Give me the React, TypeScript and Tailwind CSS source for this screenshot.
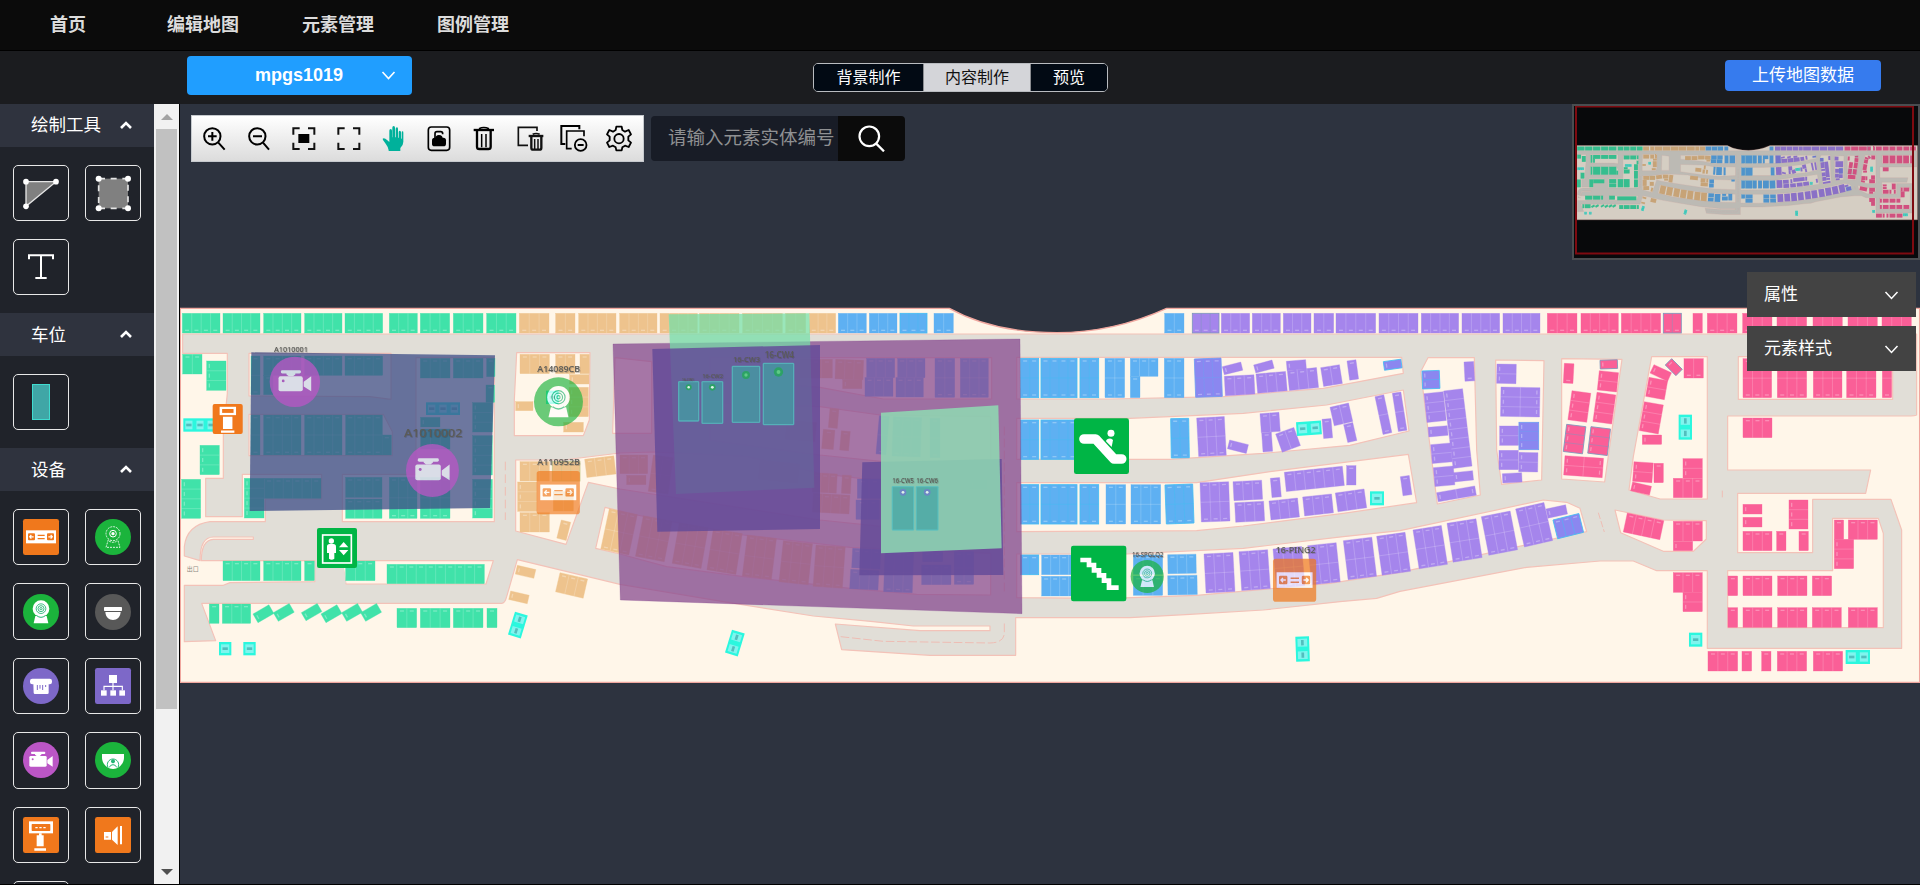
import { createContext, useContext, type ReactNode } from "react";

const FONT =
  "font-['Liberation_Sans','Noto_Sans_CJK_SC',sans-serif]";

/* ---------- parking bays: [x, y, width, height, columns, rows, rotation, outline] ---------- */
type Bay = [number, number, number, number, number?, number?, number?, string?];

const GREEN = "#40e2a9";
const TAN = "#eec38d";
const BLUE = "#5eb0f2";
const VIOLET = "#a585ec";
const INDIGO = "#8b87f0";
const PINK = "#fa5f97";
const CYAN = "#2bf7de";

const C = "#45bdf3";
const T = "#7f97bd";

const Detailed = createContext(true);

function Bays({ color, bays }: { color: string; bays: Bay[] }) {
  const detailed = useContext(Detailed);
  return (
    <>
      {bays.map(([x, y, w, h, cols = 1, rows = 1, rot = 0, outline], i) => {
        const cells: ReactNode[] = [];
        const cw = w / cols;
        const ch = h / rows;
        const wide = cw > ch;
        for (let c = 0; c < cols; c++) {
          for (let r = 0; r < rows; r++) {
            const low = rows === 1 ? y < 140 : r > 0;
            cells.push(
              wide ? (
                <rect key={`${c}-${r}`} x={cw * c + (c > 0 ? cw - 11 : 6)} y={ch * r + ch / 2 - 6} width={4} height={12} fill="#fff" opacity={0.3} />
              ) : (
                <rect key={`${c}-${r}`} x={cw * c + cw / 2 - 6} y={low ? ch * (r + 1) - 10 : ch * r + 6} width={12} height={4} fill="#fff" opacity={0.3} />
              ),
            );
          }
        }
        return (
          <g key={i} transform={`translate(${x} ${y}) rotate(${rot})`}>
            <rect width={w} height={h} fill={color} stroke={outline ?? color} strokeWidth={outline ? 2.5 : 1} />
            {detailed && (
              <>
                {Array.from({ length: cols - 1 }, (_, c) => (
                  <path key={`v${c}`} d={`M${cw * (c + 1)} 0V${h}`} stroke={outline ?? "#fff"} strokeOpacity={outline ? 0.7 : 0.28} strokeWidth={2} />
                ))}
                {Array.from({ length: rows - 1 }, (_, r) => (
                  <path key={`h${r}`} d={`M0 ${ch * (r + 1)}H${w}`} stroke={outline ?? "#fff"} strokeOpacity={outline ? 0.7 : 0.28} strokeWidth={2} />
                ))}
                {cells}
              </>
            )}
          </g>
        );
      })}
    </>
  );
}

function Chargers({ bays }: { bays: Bay[] }) {
  return (
    <>
      {bays.map(([x, y, w, h, cols = 1, rows = 1, rot = 0], i) => {
        const cw = w / cols;
        const ch = h / rows;
        const items: ReactNode[] = [];
        for (let c = 0; c < cols; c++) {
          for (let r = 0; r < rows; r++) {
            items.push(
              <g key={`${c}-${r}`}>
                <rect x={cw * c + 6} y={ch * r + 7} width={cw - 12} height={ch - 14} fill="#7ff5ee" />
                <rect
                  x={cw * c + cw / 2 - (rows > 1 ? 4 : 8)}
                  y={ch * r + ch / 2 - (rows > 1 ? 8 : 4)}
                  width={rows > 1 ? 8 : 16}
                  height={rows > 1 ? 16 : 8}
                  fill="#2d8f95"
                  opacity={0.55}
                />
              </g>,
            );
          }
        }
        return (
          <g key={i} transform={`translate(${x} ${y}) rotate(${rot})`}>
            <rect width={w} height={h} fill={CYAN} />
            {items}
          </g>
        );
      })}
    </>
  );
}

/* ---------- floor plan ---------- */
const ROAD =
  "M8 102H5210V345Q5208 348 5180 348H4643V510H5072L5057 580H4673V758H4898V598H5133L5165 690V1045H4582V812H4430L4360 783H4260L4040 802L3660 874L3590 895L3480 905L3250 930L3030 943L2850 953H2507V1066H2250L1985 1049L1966 972L2220 992H2430V978H2200L2080 965L1900 948L1630 905L1320 853L1012 779L980 890Q975 910 965 910H65L107 1022L13 1025V856H130L150 848L405 845V782H64Q64 720 100 718H220V711H100Q60 711 60 782L13 768V740Q20 675 90 665H256V597H425V523H187V650H77V535H130V400L142 280V160H8Z";

const ISLANDS = [
  "M207 160H633V298L570 290L207 288Z",
  "M207 343H610L637 395V467H207Z",
  "M708 173H943V665H487V523H708Z",
  "M490 782H940L918 852H498L490 805Z",
  "M1010 158H1230L1228 360L1210 407H1003V300Z",
  "M1007 480H1150L1320 459L1420 456L1700 470L1920 520L2040 535L2432 550V692L2110 680L1920 660L1660 620L1320 567L1225 547L1158 733L1007 693Z",
  "M1305 173L1415 185V400H1298Z",
  "M1590 173H2435V297H2110L1920 262L1590 230Z",
  "M1590 310L1920 320L2100 345L2432 350V478L2160 490L1920 465L1590 420Z",
  "M1275 622L1370 645L1690 705L2010 742L2432 760V885L2210 883L2010 865L1690 830L1460 800L1320 762L1247 745Z",
  "M2510 172H3665L3670 220L3430 265L3130 290L2790 297H2510Z",
  "M2510 355H2850L3190 340L3440 315L3670 270L3687 393L3510 436L3250 460L2970 478H2510Z",
  "M2510 548H3050L3270 515L3685 463L3710 608L3490 640L3190 678L3050 692L2510 695Z",
  "M2510 762H2840L3190 745L3490 710L3660 692L4090 600L4160 607L4200 625L4220 695L3660 817L3450 850L3050 886L2790 895L2510 893Z",
  "M3744 173H3883L3890 450L3901 585L3772 612L3722 215Z",
  "M3947 180L4092 182L4085 540L3965 553L3950 450Z",
  "M4145 176L4326 178L4274 546L4145 537Z",
  "M4415 170H4582V597H4440L4347 570L4360 470Z",
  "M4675 170H5138V298H4675Z",
  "M4305 630L4450 660L4579 662V717L4540 754H4450L4322 698Z",
  "M4643 812H4958V655H5095L5110 700V983H4643Z",
];

function FloorPlan({ detailed = true }: { detailed?: boolean }) {
  return (
    <Detailed.Provider value={detailed}>
      <path d="M1 25H2308Q2440 98 2630 98Q2800 98 2960 25H5219V1147H1Z" fill="#fff6e9" stroke="#f0a79f" strokeWidth={4} />
      <g stroke="#f3c2b8" strokeWidth={3.5} strokeLinejoin="round">
        <path d={ROAD} fill="#e1ded7" />
        {ISLANDS.map((d) => (
          <path key={d} d={d} fill="#fff6e9" />
        ))}
      </g>
      <path d="M407 776H488L498 850H407Z" fill="#e1ded7" />
      <g fill="none" stroke="#eebdb4" strokeWidth={3}>
        <path d="M976 485V660" strokeDasharray="26 12" />
        <path d="M1982 1010L2110 1024L2430 1029Q2472 1028 2473 1000V970" strokeDasharray="26 8" />
        <path d="M4627 572V592M4255 638L4273 696" strokeDasharray="20 6" />
        <path d="M2473 380V880" strokeDasharray="26 10" />
      </g>

      <Bays
        color={GREEN}
        bays={[
          [7, 40, 113, 59, 4], [129, 40, 111, 59, 4], [251, 40, 112, 59, 4], [374, 40, 112, 59, 4], [495, 40, 113, 59, 4],
          [628, 40, 84, 59, 3], [721, 40, 88, 59, 3], [820, 40, 89, 59, 3], [920, 40, 88, 59, 3],
          [8, 163, 58, 59, 2], [80, 183, 58, 88, 1, 3], [60, 436, 58, 88, 1, 3], [5, 538, 57, 117, 1, 4], [193, 535, 59, 119, 1, 4],
          [213, 168, 27, 116, 1, 2], [251, 168, 112, 58, 4], [251, 226, 28, 58], [374, 168, 112, 58, 4], [495, 168, 113, 58, 4],
          [213, 345, 27, 120, 1, 2], [251, 345, 112, 120, 4, 2], [374, 345, 112, 120, 4, 2], [497, 345, 110, 120, 4, 2], [607, 405, 27, 60],
          [721, 175, 89, 59, 3], [820, 175, 89, 59, 3], [920, 175, 25, 55], [918, 255, 26, 52], [878, 308, 59, 88, 1, 3],
          [722, 352, 58, 29], [722, 387, 88, 60, 3], [878, 407, 59, 118, 1, 4], [878, 538, 59, 116, 1, 4],
          [497, 532, 109, 60, 4], [497, 597, 109, 58, 4], [628, 532, 83, 123, 3, 2], [721, 532, 89, 123, 3, 2], [253, 535, 170, 60, 6],
          [129, 783, 111, 59, 4], [251, 783, 112, 59, 4], [374, 783, 29, 59], [497, 783, 88, 59, 3], [621, 793, 292, 58, 10],
          [88, 912, 29, 58], [127, 912, 85, 58, 3],
          [219, 942, 55, 30, 1, 1, -30], [280, 938, 55, 30, 1, 1, -30], [364, 938, 55, 28, 1, 1, -30],
          [423, 942, 55, 30, 1, 1, -30], [485, 938, 55, 30, 1, 1, -30], [542, 938, 55, 30, 1, 1, -30],
          [651, 925, 59, 58, 2], [721, 925, 89, 58, 3], [820, 925, 89, 58, 3], [921, 925, 30, 58],
        ]}
      />
      <Bays
        color={TAN}
        bays={[
          [1018, 40, 89, 59, 3], [1127, 40, 58, 59, 2], [1196, 40, 112, 59, 4], [1319, 40, 112, 59, 4], [1440, 40, 112, 59, 4],
          [1559, 40, 118, 59, 4], [1688, 40, 119, 59, 4], [1817, 40, 60, 59, 2], [1888, 40, 79, 59, 3],
          [1020, 163, 88, 58, 3], [1127, 163, 58, 58, 2], [1200, 163, 28, 58], [1169, 224, 58, 28], [1167, 262, 58, 88, 1, 3],
          [1007, 305, 52, 27], [1151, 367, 59, 29], [1020, 485, 88, 58, 3], [1117, 485, 83, 58, 3, 1, 0, "#c9c98d"], [1214, 478, 88, 55, 3, 1, -7],
          [1013, 546, 58, 88, 1, 3], [1120, 575, 60, 58, 2], [1020, 638, 88, 58, 3], [1144, 660, 29, 56, 1, 1, 14],
          [1012, 796, 57, 27, 1, 1, 13], [992, 873, 57, 26, 1, 1, 13], [1140, 818, 85, 59, 3, 1, 13],
        ]}
      />
      <g transform="translate(1260 0)">
        <Bays
          color={TAN}
          bays={[
            [60, 465, 83, 56, 3], [80, 526, 58, 28], [160, 465, 60, 110, 2, 2, 8],
            [28, 626, 86, 124, 3, 2, 12], [130, 647, 88, 124, 3, 2, 11], [238, 668, 88, 124, 3, 2, 10], [340, 687, 88, 124, 3, 2, 9],
            [442, 705, 88, 124, 3, 2, 7], [550, 722, 88, 124, 3, 2, 6], [648, 735, 88, 124, 3, 2, 4],
            [400, 185, 88, 58, 3], [500, 185, 88, 58, 3], [600, 178, 97, 56, 3], [707, 178, 84, 58, 3, 1, 2], [728, 238, 58, 28],
            [690, 325, 27, 58, 1, 1, 5], [670, 388, 35, 58, 1, 1, 5], [724, 392, 27, 58, 1, 1, 5], [560, 360, 90, 58, 3, 1, 5],
            [640, 518, 72, 58, 3, 1, 3], [727, 525, 27, 55, 1, 1, 3], [640, 580, 110, 56, 4, 1, 3], [480, 480, 120, 58, 4, 1, 6],
          ]}
        />
        <Bays
          color={BLUE}
          bays={[
            [715, 40, 84, 59, 3], [808, 40, 83, 59, 3], [900, 40, 81, 59, 3, 1, 0, C], [1002, 40, 58, 59, 2],
            [800, 175, 84, 58, 3], [893, 175, 82, 58, 3], [795, 233, 84, 56, 3], [888, 233, 82, 58, 3], [1005, 175, 59, 117, 2, 2], [1081, 175, 84, 117, 3, 2],
            [838, 347, 30, 115, 1, 2, 5], [880, 350, 85, 118, 3, 2, 2], [990, 355, 30, 118, 1, 2], [772, 537, 70, 58, 2], [768, 600, 70, 58, 2],
            [1110, 540, 50, 28],
            [758, 745, 85, 58, 3, 1, 3], [752, 808, 85, 58, 3, 1, 3], [855, 755, 86, 120, 3, 2, 2], [968, 755, 60, 30, 2], [965, 795, 88, 59, 3], [1063, 755, 58, 98, 2, 2],
          ]}
        />
      </g>
      <g transform="translate(2490 0)">
        <Bays
          color={BLUE}
          bays={[
            [464, 40, 58, 59, 2],
            [32, 175, 54, 118, 2, 2, 0, C], [93, 175, 108, 118, 4, 2, 0, C], [210, 175, 56, 118, 2, 2, 0, C], [285, 175, 59, 118, 2, 2],
            [361, 175, 83, 54, 3], [361, 229, 29, 64], [463, 175, 59, 118, 2, 2],
            [32, 360, 54, 118, 2, 2, 0, C], [93, 360, 108, 118, 4, 2, 0, C], [482, 356, 54, 118, 2, 2, -1, C],
            [32, 554, 54, 118, 2, 2, 0, C], [93, 554, 108, 118, 4, 2, 0, C], [210, 554, 56, 118, 2, 2, 0, C], [288, 554, 59, 118, 2, 2], [363, 554, 89, 118, 3, 2], [465, 555, 83, 117, 3, 2, -2, C],
            [32, 765, 54, 59, 2, 1, 0, C], [95, 765, 108, 59, 4], [95, 829, 108, 59, 4], [370, 765, 88, 58, 3], [370, 828, 88, 58, 3],
            [473, 764, 85, 57, 3, 1, -1], [473, 827, 88, 58, 3, 1, -1],
          ]}
        />
        <Bays color={INDIGO} bays={[[553, 177, 80, 115, 3, 2, -2, "#6f9df2"], [1120, 185, 53, 26, 1, 1, -8, C]]} />
        <Bays
          color={VIOLET}
          bays={[
            [547, 40, 80, 59, 3, 1, 0, T], [634, 40, 85, 59, 3], [727, 40, 84, 59, 3], [820, 40, 83, 59, 3], [912, 40, 59, 59, 2],
            [978, 40, 119, 59, 4], [1107, 40, 117, 59, 4], [1234, 40, 112, 59, 4], [1356, 40, 113, 59, 4], [1479, 40, 111, 59, 4],
            [637, 200, 57, 25, 1, 1, -14], [643, 229, 89, 58, 3, 1, -3], [731, 195, 57, 25, 1, 1, -15], [738, 222, 89, 58, 3, 1, -5],
            [829, 184, 58, 28, 1, 1, -5], [832, 212, 88, 60, 3, 1, -6], [932, 203, 57, 57, 2, 1, -9], [1011, 183, 27, 58, 1, 1, -8],
            [560, 354, 83, 116, 3, 2, -3], [659, 420, 58, 27, 1, 1, 14], [750, 341, 57, 57, 2, 1, -4], [755, 398, 29, 58, 1, 1, -4],
            [797, 402, 58, 58, 2, 1, -20], [936, 358, 27, 58, 1, 1, -5], [960, 322, 57, 57, 2, 1, -13], [1001, 374, 28, 55, 1, 1, -13],
            [1095, 290, 27, 116, 1, 2, -12], [1147, 280, 26, 116, 1, 2, -9],
            [570, 548, 86, 118, 3, 2, -2], [669, 545, 86, 57, 3, 1, -3], [674, 608, 87, 59, 3, 1, -3], [781, 535, 28, 58, 1, 1, -5],
            [823, 517, 175, 58, 6, 1, -6], [1010, 497, 28, 58], [777, 603, 86, 57, 3, 1, -6], [878, 591, 87, 57, 3, 1, -6], [976, 579, 87, 57, 3, 1, -8], [1171, 530, 27, 58, 1, 1, -8],
            [582, 762, 87, 117, 3, 2, -3], [687, 755, 86, 117, 3, 2, -4], [789, 747, 86, 118, 3, 2, -5], [893, 737, 86, 118, 3, 2, -6],
            [1000, 722, 86, 118, 3, 2, -7], [1100, 709, 86, 118, 3, 2, -8], [1209, 690, 86, 118, 3, 2, -9],
          ]}
        />
      </g>
      <g transform="translate(3660 120)">
        <Bays
          color={VIOLET}
          bays={[
            [141, 550, 88, 118, 3, 2, -9], [244, 530, 88, 118, 3, 2, -11], [347, 507, 87, 117, 3, 2, -13], [438, 507, 60, 28, 1, 1, -12],
            [192, 66, 29, 58, 1, 1, -3], [72, 161, 58, 87, 1, 3, -6], [131, 153, 57, 234, 1, 8, -7], [84, 262, 58, 29, 1, 1, -5],
            [92, 314, 60, 57, 1, 2, -5], [100, 383, 60, 57, 1, 2, -5], [160, 398, 58, 28, 1, 1, -6], [110, 458, 116, 28, 2, 1, -10],
            [291, 72, 58, 58, 1, 2, 1], [303, 141, 117, 88, 2, 3, 1], [299, 258, 57, 58, 1, 2], [297, 331, 58, 58, 1, 2], [357, 337, 57, 58, 1, 2, 1], [307, 401, 58, 28, 1, 1, -3],
          ]}
        />
        <Bays color={INDIGO} bays={[[66, 93, 52, 54, 1, 2, -2, C], [357, 247, 59, 82, 1, 3, 0, "#6f9df2"], [459, 540, 80, 58, 3, 1, -14, C]]} />
        <Bays
          color={PINK}
          bays={[
            [493, 70, 29, 59, 1, 1, 3], [600, 61, 52, 26, 1, 1, -2, T], [598, 92, 58, 58, 1, 2, 6], [516, 152, 57, 88, 1, 3, 8], [591, 157, 57, 88, 1, 3, 8],
            [500, 253, 58, 82, 1, 3, 7, T], [573, 260, 59, 80, 1, 3, 7, T], [495, 347, 116, 58, 2, 2, 4], [852, 56, 58, 58, 2],
            [762, 74, 58, 28, 1, 1, 25], [815, 56, 45, 27, 1, 1, 45, T], [747, 112, 57, 58, 1, 2, 10], [733, 185, 58, 88, 1, 3, 10],
            [727, 285, 58, 28], [702, 365, 58, 59, 1, 2, 4], [762, 370, 28, 58], [698, 426, 58, 27, 1, 1, 13], [849, 356, 58, 58, 1, 2], [820, 415, 87, 58, 3],
            [1029, 56, 86, 117, 3, 2], [1132, 56, 88, 117, 3, 2], [1240, 56, 86, 117, 3, 2], [1340, 56, 88, 117, 3, 2], [1447, 56, 28, 117, 1, 2],
            [1029, 234, 87, 59, 3], [1029, 493, 57, 29], [1029, 532, 57, 29], [1029, 574, 87, 58, 3], [1130, 574, 28, 58], [1197, 574, 28, 58], [1167, 480, 57, 87, 1, 3],
            [1303, 540, 28, 58], [1345, 540, 87, 58, 3], [1303, 598, 58, 88, 1, 3], [820, 544, 87, 59, 3], [820, 604, 58, 28], [682, 519, 112, 58, 4, 1, 12],
            [820, 698, 87, 59, 3], [849, 757, 58, 58, 1, 2], [984, 708, 29, 59], [1029, 708, 87, 59, 3], [1133, 708, 88, 59, 3], [1237, 708, 58, 59, 2],
            [984, 803, 29, 59], [1029, 803, 87, 59, 3], [1133, 803, 88, 59, 3], [1237, 803, 87, 59, 3], [1345, 803, 87, 59, 3],
            [924, 934, 89, 59, 3], [1026, 934, 29, 59], [1085, 934, 28, 59], [1132, 934, 88, 59, 3], [1240, 934, 88, 59, 3],
          ]}
        />
      </g>
      <Bays
        color={PINK}
        bays={[
          [4102, 40, 89, 59, 3], [4203, 40, 112, 59, 4], [4324, 40, 118, 59, 4], [4450, 40, 54, 59, 2, 1, 0, T], [4539, 40, 28, 59], [4582, 40, 89, 59, 3],
          [4688, 40, 88, 59, 3], [4791, 40, 89, 59, 3], [4899, 40, 88, 59, 3], [5004, 40, 88, 59, 3], [5106, 40, 88, 59, 3],
        ]}
      />
      <Chargers
        bays={[
          [10, 355, 100, 40, 3], [117, 1026, 37, 40], [190, 1026, 37, 40], [1005, 935, 40, 72, 1, 2, 17], [738, 307, 102, 38, 3], [1098, 272, 38, 40],
          [1656, 989, 40, 72, 1, 2, 17], [3348, 367, 75, 41, 2, 1, -4], [3570, 574, 42, 42], [3346, 1010, 41, 75, 1, 2, -2],
          [4496, 344, 40, 75, 1, 2], [4527, 998, 40, 42], [4997, 1050, 73, 42, 2],
        ]}
      />
      <text x={20} y={812} fontSize={18} fill="#8d8a84">出口</text>
    </Detailed.Provider>
  );
}

/* ---------- device icons, drawn in a 108 × 108 box ---------- */
const Tile = ({ fill }: { fill: string }) => <rect width={108} height={108} rx={7} fill={fill} />;
const Disc = ({ fill }: { fill: string }) => <circle cx={54} cy={54} r={54} fill={fill} />;

const GuideScreen = () => (
  <g>
    <Tile fill="#f0781c" />
    <rect x={9} y={34} width={90} height={39} fill="#fff" />
    <rect x={15} y={43} width={21} height={21} rx={3} fill="#f0781c" />
    <rect x={72} y={43} width={21} height={21} rx={3} fill="#f0781c" />
    <path d="M32 53.5H20M25 48L20 53.5L25 59M76 53.5H88M83 48L88 53.5L83 59" fill="none" stroke="#fff" strokeWidth={3.5} />
    <path d="M44 49H65M44 59H65" stroke="#f0781c" strokeWidth={3.5} />
  </g>
);
const FinderOutline = () => (
  <g fill="none" stroke="#fff">
    <g stroke="none"><Disc fill="#1bb43c" /></g>
    <circle cx={54} cy={44} r={21} strokeWidth={2.5} strokeDasharray="6 3" />
    <circle cx={54} cy={44} r={10} strokeWidth={3} />
    <circle cx={54} cy={44} r={5} fill="#fff" stroke="none" />
    <path d="M40 62L33 85H75L68 62M42 66Q54 74 66 66" strokeWidth={2.5} strokeDasharray="6 3" />
  </g>
);
const Finder = () => (
  <g fill="none" stroke="#22b573">
    <g stroke="none"><Disc fill="#1bb43c" /></g>
    <path d="M32 88L37 66H71L76 88Z" fill="#fff" stroke="none" />
    <circle cx={54} cy={44} r={25} fill="#fff" stroke="none" />
    <circle cx={54} cy={44} r={14.5} strokeWidth={2.6} />
    <circle cx={54} cy={44} r={9} strokeWidth={2.6} />
    <circle cx={54} cy={44} r={3.5} strokeWidth={2.6} />
    <path d="M41 65Q54 75 67 65" strokeWidth={3} />
  </g>
);
const DomeCamera = () => (
  <g fill="#fff">
    <Disc fill="#585858" />
    <rect x={27} y={39} width={54} height={12} rx={2} />
    <path d="M31 54H77C76 70 66 78 54 78S32 70 31 54Z" />
  </g>
);
const Sensor = () => (
  <g fill="#fff">
    <Disc fill="#7d68c8" />
    <rect x={21} y={32} width={66} height={17} rx={7} />
    <path d="M31 45H77V74Q77 78 73 78H36Q32 78 32 74Z" />
    <path d="M43 51V66M51 51V62M59 51V66M68 51V57" stroke="#7d68c8" strokeWidth={3} />
  </g>
);
const Network = () => (
  <g fill="#fff">
    <Tile fill="#7d68c8" />
    <rect x={42} y={21} width={24} height={24} />
    <path d="M54 45V67M27 67V55H82V67" fill="none" stroke="#fff" strokeWidth={3.5} />
    <rect x={18} y={67} width={17} height={16} />
    <rect x={46} y={67} width={17} height={16} />
    <rect x={73} y={67} width={17} height={16} />
  </g>
);
const VideoCamera = () => (
  <g fill="#fff">
    <Disc fill="#bb56c6" />
    <rect x={19} y={42} width={52} height={32} rx={4} />
    <rect x={24} y={29} width={43} height={7} rx={3} />
    <path d="M36 34H55V38L50 42H41L36 38ZM73 54L89 42V74L73 64Z" />
    <circle cx={29} cy={52} r={3} fill="#bb56c6" />
  </g>
);
const FaceDome = () => (
  <g fill="#fff">
    <Disc fill="#1bb43c" />
    <path d="M21 36H87V48C86 66 71 81 54 81S22 66 21 48Z" />
    <g fill="none" stroke="#22b573" strokeWidth={3}>
      <path d="M39 76A17 17 0 1 1 69 76" />
      <path d="M43 76Q46 68 54 68T65 76" />
    </g>
    <circle cx={54} cy={58} r={6} fill="#22b573" />
  </g>
);
const Terminal = () => (
  <g>
    <Tile fill="#f0781c" />
    <path d="M18 13H90V49H18Z" fill="#fff" />
    <rect x={26} y={21} width={56} height={21} rx={2} fill="#f0781c" />
    <path d="M37 32H70" stroke="#fff" strokeWidth={4} strokeDasharray="7 5" />
    <path d="M41 55H62V88H41ZM34 94H69V101H34ZM48 49H56V56H48Z" fill="#fff" />
  </g>
);
const Horn = () => (
  <g fill="#fff">
    <Tile fill="#f0781c" />
    <path d="M27 45H48V68H27ZM51 45L68 28V84L51 68ZM75 27H81V82H75Z" />
    <path d="M32 60H40" stroke="#f0781c" strokeWidth={3} />
  </g>
);

/* ---------- main map ---------- */
const LABEL = "drop-shadow-[2px_2px_1px_rgba(60,60,60,0.45)]";

function MapLabel({ x, y, size, w, children }: { x: number; y: number; size: number; w: number; children: string }) {
  return (
    <text x={x} y={y} fontSize={size} textLength={w} lengthAdjust="spacingAndGlyphs" fill="#5b5b57" className={`font-['Noto_Sans'] font-medium ${LABEL}`}>
      {children}
    </text>
  );
}

function Cabinet({ x, y, w, h, dot, r }: { x: number; y: number; w: number; h: number; dot: string; r: number }) {
  return (
    <g>
      <rect x={x} y={y} width={w} height={h} rx={2} fill="#3fa2a4" fillOpacity={0.7} stroke="#55bfc0" strokeOpacity={0.75} strokeWidth={4} />
      <circle cx={x + w / 2} cy={y + (h > 140 ? 26 : 17)} r={r} fill={dot} />
      <circle cx={x + w / 2} cy={y + (h > 140 ? 26 : 17)} r={r / 2.4} fill={h > 140 ? "#5fca86" : "#dff3ea"} />
    </g>
  );
}

function MapCanvas() {
  return (
    <svg className="block h-full w-full" viewBox="180 104 1740 780">
      <g transform="translate(180 300) scale(0.33333)">
        <FloorPlan />

        <path d="M214 157L945 166L930 624L209 633Z" fill="#3f4f88" fillOpacity={0.76} />
        <MapLabel x={282} y={157} size={22} w={102}>A1010001</MapLabel>
        <g transform="translate(269 170) scale(1.4)" opacity={0.75}><VideoCamera /></g>
        <MapLabel x={672} y={412} size={34} w={175}>A1010002</MapLabel>
        <g transform="translate(678 432) scale(1.47)" opacity={0.75}><VideoCamera /></g>

        <g transform="translate(98 312) scale(0.835)">
          <Tile fill="#f0781c" />
          <path d="M25 10H84V40H25Z" fill="#fff" />
          <path d="M34 18H75V32H34Z" fill="#f0781c" />
          <path d="M37 46H71V90H37ZM30 95H78V103H30Z" fill="#fff" />
        </g>

        <g transform="translate(411 684)">
          <rect width={120} height={120} rx={6} fill="#00b545" />
          <rect x={17} y={21} width={86} height={84} fill="none" stroke="#fff" strokeWidth={5} />
          <circle cx={43} cy={39} r={8} fill="#fff" />
          <path d="M30 56Q30 48 38 48H49Q57 48 57 56V75H52V92Q44 99 36 92V75H30ZM66 58L80 42L94 58ZM66 66L80 82L94 66Z" fill="#fff" />
        </g>

        <g transform="translate(1062 232) scale(1.36)" opacity={0.65}><Finder /></g>
        <MapLabel x={1072} y={216} size={24} w={128}>A14089CB</MapLabel>
        <g transform="translate(1070 513) scale(1.2)" opacity={0.65}><GuideScreen /></g>
        <MapLabel x={1072} y={496} size={24} w={128}>A110952B</MapLabel>

        <g transform="translate(1260 0)">
          <path d="M39 132L1260 117L1266 941L61 900Z" fill="#87498f" fillOpacity={0.74} stroke="#83458d" strokeOpacity={0.4} strokeWidth={2} />
          <path d="M206 43L628 40L643 563L228 582Z" fill="#73dfa7" fillOpacity={0.72} />
          <path d="M157 147L660 135V687L172 695Z" fill="#644a99" fillOpacity={0.83} />
          <path d="M787 487L1205 477L1210 825L778 826Z" fill="#644a99" fillOpacity={0.83} />
          <path d="M843 338L1195 316L1205 745L843 760Z" fill="#8edab3" fillOpacity={0.85} />
          <Cabinet x={236} y={245} w={60} h={118} dot="#2da266" r={9} />
          <Cabinet x={306} y={245} w={62} h={125} dot="#2da266" r={10} />
          <Cabinet x={397} y={199} w={82} h={168} dot="#2da266" r={12} />
          <Cabinet x={490} y={190} w={91} h={184} dot="#2da266" r={14} />
          <Cabinet x={877} y={560} w={64} h={130} dot="#6d86c4" r={10} />
          <Cabinet x={949} y={560} w={65} h={130} dot="#6d86c4" r={10} />
          <MapLabel x={246} y={242} size={12} w={36}>16-CW1</MapLabel>
          <MapLabel x={307} y={235} size={17} w={62}>16-CW2</MapLabel>
          <MapLabel x={399} y={187} size={23} w={81}>16-CW3</MapLabel>
          <MapLabel x={494} y={175} size={25} w={88}>16-CW4</MapLabel>
          <MapLabel x={877} y={549} size={19} w={65}>16-CW5</MapLabel>
          <MapLabel x={949} y={549} size={19} w={65}>16-CW6</MapLabel>
        </g>

        <g transform="translate(2490 0)">
          <rect x={192} y={355} width={165} height={167} rx={7} fill="#00b545" />
          <path d="M222 417H257L312 477H335" fill="none" stroke="#fff" strokeWidth={29} strokeLinecap="round" strokeLinejoin="round" />
          <circle cx={303} cy={400} r={10.5} fill="#fff" />
          <path d="M288 424Q290 414 304 416L309 420L305 441Z" fill="#fff" />
          <rect x={183} y={737} width={166} height={167} rx={7} fill="#00b545" />
          <path d="M211 780H237V795H252V811H267V826H282V842H297V863H326" fill="none" stroke="#fff" strokeWidth={14} />
          <g transform="translate(362 780) scale(0.92)" opacity={0.7}><Finder /></g>
          <MapLabel x={366} y={770} size={19} w={94}>16-SPGLQ2</MapLabel>
          <g transform="translate(789 776) scale(1.2)" opacity={0.7}><GuideScreen /></g>
          <MapLabel x={797} y={760} size={24} w={120}>16-PING2</MapLabel>
        </g>
      </g>
    </svg>
  );
}

/* ---------- toolbar ---------- */
const TOOLBAR: ReactNode[] = [
  <g fill="none" stroke="#000" strokeWidth={6}>
    <circle cx={99} cy={109} r={24.5} />
    <path d="M117 128L136 149M86 109H112M99 96V122" />
  </g>,
  <g fill="none" stroke="#000" strokeWidth={6}>
    <circle cx={234} cy={109} r={24.5} />
    <path d="M251 128L269 149M221 109H248" />
  </g>,
  <g fill="none" stroke="#111" strokeWidth={6}>
    <path d="M342 104V85H361M386 85H405V104M342 128V147H361M386 147H405V128" />
    <path d="M357 102H390V129H357Z" fill="#000" stroke="none" />
  </g>,
  <path d="M477 104V85H496M521 85H540V104M477 128V147H496M521 147H540V128" fill="none" stroke="#111" strokeWidth={6} />,
  <path
    d="M628 151Q627 141 619 131L611 120Q608 115 613 115Q618 115 624 121L630 126V92Q630 87 634 87Q638 87 638 92V112H639V83Q639 78 643 78Q647 78 647 83V112H649V87Q649 82 653 82Q656 82 656 87V113H658V97Q658 92 661 92Q665 92 665 97V115L667 117V98Q667 94 670 94Q672 94 672 98V125Q672 136 663 144V153H628Z"
    fill="#00b19b"
  />,
  <g fill="none" stroke="#000">
    <rect x={747} y={81} width={64} height={70} rx={9} strokeWidth={5} />
    <path d="M767 114V101Q767 95 773 95H784Q790 95 790 101V103" strokeWidth={5} />
    <rect x={758} y={113} width={42} height={26} rx={8} fill="#000" stroke="none" />
    <circle cx={779} cy={116} r={11} fill="#000" stroke="none" />
  </g>,
  <g fill="none" stroke="#000">
    <path d="M883 90H944" strokeWidth={7} />
    <path d="M899 86Q913 79 929 86" strokeWidth={5} />
    <path d="M893 92V140Q893 147 900 147H927Q934 147 934 140V92" strokeWidth={7} />
    <path d="M907 102V142M920 102V142" strokeWidth={4.5} />
  </g>,
  <g fill="none" stroke="#111">
    <path d="M1073 93V82H1017V136H1046" strokeWidth={5} />
    <path d="M1048 108H1092" strokeWidth={7} />
    <path d="M1060 103Q1070 98 1081 103" strokeWidth={5} />
    <path d="M1056 110V143Q1056 149 1062 149H1080Q1086 149 1086 143V110" strokeWidth={7} />
    <path d="M1066 117V147M1076 117V147" strokeWidth={4.5} />
  </g>,
  <g fill="none" stroke="#000">
    <path d="M1200 88V78H1146V132H1158" strokeWidth={6} />
    <path d="M1214 109V93H1162V146H1177" strokeWidth={5} />
    <circle cx={1204} cy={135} r={17.5} strokeWidth={5.5} />
    <path d="M1195 135H1213" strokeWidth={6} />
  </g>,
  <g fill="none" stroke="#000" strokeWidth={5.5} strokeLinejoin="round">
    <circle cx={1319} cy={116} r={14} />
    <path d="M1311 80H1327L1329 90L1337 95L1348 90L1355 103L1347 110V121L1355 128L1348 141L1337 137L1329 142L1327 151H1311L1309 142L1301 137L1290 141L1283 128L1291 121V110L1283 103L1290 90L1301 95L1309 90Z" />
  </g>,
];

const Chevron = ({ className, up, weight = 2 }: { className: string; up?: boolean; weight?: number }) => (
  <svg className={className} viewBox="0 0 14 9" fill="none" stroke="currentColor" strokeWidth={weight}>
    <path d={up ? "M2 7L7 2L12 7" : "M1 1L7 7.5L13 1"} />
  </svg>
);

/* ---------- side panel ---------- */
function ToolButton({ children }: { children: ReactNode }) {
  return (
    <button className="flex h-[56.4px] w-14 items-center justify-center rounded-[5px] border border-[#e8e8e8]">
      <svg className="size-9" viewBox="0 0 108 108" overflow="visible">{children}</svg>
    </button>
  );
}

function Section({ title, children }: { title: string; children: ReactNode }) {
  return (
    <section>
      <h2 className="flex h-[42.6px] items-center justify-between bg-[#2f333e] pr-[21px] pl-[31px] text-[17.5px] font-normal text-white">
        {title}
        <Chevron up weight={2.6} className="h-[9px] w-[14px]" />
      </h2>
      <div className="grid grid-cols-[56px_56px] gap-x-4 gap-y-[18px] px-[13px] py-[18px]">{children}</div>
    </section>
  );
}

function SidePanel() {
  return (
    <aside className="flex w-[180px] shrink-0 border-r border-black bg-[#20232a]">
      <div className="w-[154px] overflow-hidden">
        <Section title="绘制工具">
          <ToolButton>
            <path d="M9 20L99 20L9 94Z" fill="#808080" stroke="#e4e4e4" strokeWidth={4} />
            <g fill="#fff"><circle cx={9} cy={20} r={8.5} /><circle cx={99} cy={20} r={8.5} /><circle cx={9} cy={94} r={8.5} /></g>
          </ToolButton>
          <ToolButton>
            <rect x={11} y={11} width={88} height={89} fill="#808080" />
            <rect x={11} y={11} width={88} height={89} fill="none" stroke="#e4e4e4" strokeWidth={5} strokeDasharray="18 17" strokeDashoffset={-1} />
            <g fill="#fff"><circle cx={11} cy={11} r={9} /><circle cx={99} cy={11} r={9} /><circle cx={11} cy={100} r={9} /><circle cx={99} cy={100} r={9} /></g>
          </ToolButton>
          <ToolButton>
            <path d="M18 31V19H90V31M54 19V87M37 87H71" fill="none" stroke="#fff" strokeWidth={6} />
          </ToolButton>
        </Section>
        <Section title="车位">
          <ToolButton>
            <rect x={28.5} y={1.5} width={51} height={105} fill="#40a6a6" stroke="#40dcd0" strokeWidth={3} />
          </ToolButton>
        </Section>
        <Section title="设备">
          <ToolButton><GuideScreen /></ToolButton>
          <ToolButton><FinderOutline /></ToolButton>
          <ToolButton><Finder /></ToolButton>
          <ToolButton><DomeCamera /></ToolButton>
          <ToolButton><Sensor /></ToolButton>
          <ToolButton><Network /></ToolButton>
          <ToolButton><VideoCamera /></ToolButton>
          <ToolButton><FaceDome /></ToolButton>
          <ToolButton><Terminal /></ToolButton>
          <ToolButton><Horn /></ToolButton>
          <ToolButton>{null}</ToolButton>
        </Section>
      </div>
      <div className="flex w-[25px] flex-col items-center justify-between bg-[#f1f1f1]">
        <div className="flex h-[25px] shrink-0 items-center justify-center">
          <svg className="h-[6px] w-3" viewBox="0 0 12 6"><path d="M0 6L6 0L12 6Z" fill="#a3a3a3" /></svg>
        </div>
        <div className="h-[580px] w-[21px] shrink-0 bg-[#c1c1c1]" />
        <div className="flex flex-1 items-end pb-[9px]">
          <svg className="h-[6px] w-3" viewBox="0 0 12 6"><path d="M0 0L6 6L12 0Z" fill="#505050" /></svg>
        </div>
      </div>
    </aside>
  );
}

function Overview() {
  return (
    <div className="w-[348px] border-2 border-[#4a4d50] bg-[#08090b]">
      <svg className="block h-[152px] w-full" viewBox="1574 106 344 152">
        <g transform="translate(1576.7 143.9) scale(0.0653 0.0662)" opacity={0.83}><FloorPlan detailed={false} /></g>
        <rect x={1576} y={106.5} width={337} height={147} fill="none" stroke="#7e0a10" strokeWidth={2} />
      </svg>
    </div>
  );
}

export default function App() {
  return (
    <div className={`flex h-[885px] w-[1920px] flex-col overflow-hidden border-b border-black bg-[#2d333f] ${FONT}`}>
      <header className="flex h-[51px] shrink-0 items-center border-b border-black bg-[#0b0b0b] text-[18px] font-bold text-[#dcdcdc]">
        {["首页", "编辑地图", "元素管理", "图例管理"].map((item) => (
          <a key={item} className="w-[135px] pl-px text-center">{item}</a>
        ))}
      </header>

      <div className="flex h-[53px] shrink-0 items-start bg-[#1b1c1f]">
        <button className="mt-[5px] ml-[187px] flex h-[39px] w-[225px] items-center justify-end rounded-[4px] bg-[#209eff] pr-4 text-[18px] font-bold text-white">
          <span className="pr-[38px]">mpgs1019</span>
          <Chevron className="h-[9px] w-[15px]" weight={1.6} />
        </button>
        <div className="mt-3 ml-[401px] flex h-[29px] w-[295px] overflow-hidden rounded-[5px] border border-[#b9bcc0] text-[16px] text-white">
          <button className="w-[109px] bg-[#020a14]">背景制作</button>
          <button className="w-[108px] border-x border-[#8a8c90] bg-[#d4d5d9] text-[#111]">内容制作</button>
          <button className="flex-1 bg-[#020a14]">预览</button>
        </div>
        <button className="mt-[9px] ml-[617px] h-[31px] w-[156px] rounded-[4px] bg-[#367bee] text-[17px] leading-none text-white">上传地图数据</button>
      </div>

      <div className="flex min-h-0 flex-1">
        <SidePanel />
        <main className="relative min-w-0 flex-1">
          <MapCanvas />
          <div className="absolute inset-x-0 top-0 flex items-start justify-between">
            <div className="flex items-start gap-[7px] pt-[11px] pl-[11px]">
              <div className="flex h-[47px] w-[453px] border border-[#c6cace] bg-linear-to-b from-white to-[#dcdcdc]">
                {TOOLBAR.map((icon, i) => (
                  <svg key={i} className="size-[45px] shrink-0" viewBox={`${38 + 135 * i} 48 135 135`}>{icon}</svg>
                ))}
              </div>
              <div className="mt-px flex h-[45px] overflow-hidden rounded-[4px]">
                <div className="flex w-[187px] items-center overflow-hidden bg-[#181c26] pb-px pl-[17px] text-[18.5px] whitespace-nowrap text-[#8f9092]">请输入元素实体编号</div>
                <button className="flex w-[67px] items-center justify-center bg-[#0b0b0b]">
                  <svg className="size-[27px]" viewBox="0 0 27 27" fill="none" stroke="#fff" strokeWidth={2.2}>
                    <circle cx={11.3} cy={11.3} r={9.8} />
                    <path d="M18.2 18.6L26 26.4" />
                  </svg>
                </button>
              </div>
            </div>
            <div className="flex flex-col items-end">
              <Overview />
              <div className="mt-3 mr-1 flex flex-col gap-[9px] text-[17px] text-white">
                {["属性", "元素样式"].map((item) => (
                  <button key={item} className="flex h-[45px] w-[169px] items-center justify-between bg-[#434343] pt-px pr-[17px] pl-[17px]">
                    {item}
                    <Chevron className="h-[9px] w-[15px]" weight={1.5} />
                  </button>
                ))}
              </div>
            </div>
          </div>
        </main>
      </div>
    </div>
  );
}
